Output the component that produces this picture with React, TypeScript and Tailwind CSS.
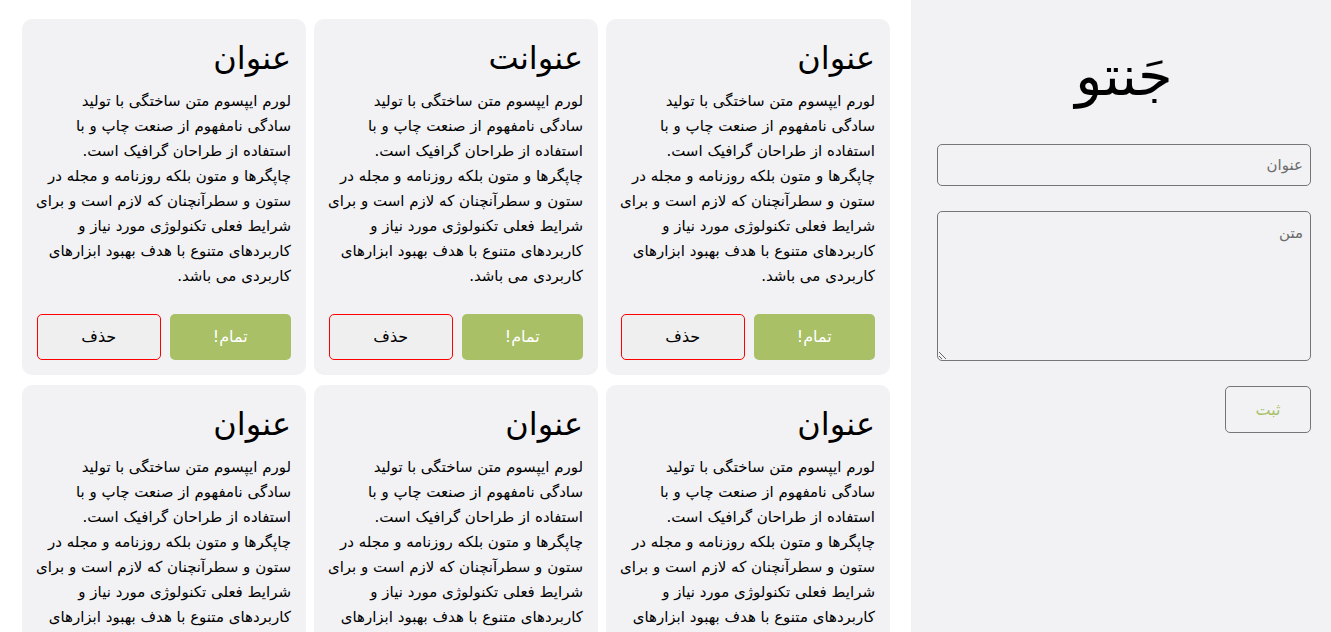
import type { ReactNode } from "react";

// lines are kept as the reference wraps them
const LOREM_LINES = [
  "لورم ایپسوم متن ساختگی با تولید",
  "سادگی نامفهوم از صنعت چاپ و با",
  "استفاده از طراحان گرافیک است.",
  "چاپگرها و متون بلکه روزنامه و مجله در",
  "ستون و سطرآنچنان که لازم است و برای",
  "شرایط فعلی تکنولوژی مورد نیاز و",
  "کاربردهای متنوع با هدف بهبود ابزارهای",
  "کاربردی می باشد.",
];

const notes = [
  { id: 1, title: "عنوان" },
  { id: 2, title: "عنوانت" },
  { id: 3, title: "عنوان" },
  { id: 4, title: "عنوان" },
  { id: 5, title: "عنوان" },
  { id: 6, title: "عنوان" },
];

function NoteCard({ title, children }: { title: string; children: ReactNode }) {
  return (
    <div className="flex flex-col rounded-[10px] bg-[#f2f2f4] px-[15px] pt-[15px] pb-[15px]">
      <h2 className="text-[32px] leading-[48px] text-black">{title}</h2>
      <p className="mt-[7px] text-[15px] leading-[25px] text-black">{children}</p>
      <div className="mt-auto flex gap-[9px] pt-[25px]">
        <button className="h-[46px] flex-1 rounded-[5px] bg-[#a9c067] text-[16px] text-white">
          تمام!
        </button>
        <button className="h-[46px] flex-1 rounded-[5px] border border-[#ff0000] bg-[#efefef] text-[16px] text-black">
          حذف
        </button>
      </div>
    </div>
  );
}

export default function App() {
  return (
    <div
      dir="rtl"
      className="flex min-h-screen bg-white"
      style={{ fontFamily: '"DejaVu Sans", sans-serif' }}
    >
      {/* sidebar form */}
      <aside className="sticky top-0 flex h-screen w-[420px] shrink-0 flex-col bg-[#f2f2f4] pr-[20px] pl-[26px]">
        <h1 className="mt-[36px] text-center text-[56px] leading-[80px] text-black">جَنتو</h1>
        <input
          placeholder="عنوان"
          className="mt-[28px] h-[42px] w-full rounded-[5px] border border-[#767676] bg-transparent px-[7px] text-[15px] placeholder:text-[#6b6b6b]"
        />
        <textarea
          placeholder="متن"
          className="mt-[25px] h-[150px] w-full rounded-[5px] border border-[#767676] bg-transparent px-[7px] py-[10px] text-[15px] placeholder:text-[#6b6b6b]"
        />
        <button className="mt-[25px] h-[47px] w-[86px] rounded-[5px] border border-[#767676] text-[16px] text-[#a9c067]">
          ثبت
        </button>
      </aside>

      {/* notes grid */}
      <main className="grid flex-1 grid-cols-3 content-start gap-x-2 gap-y-[10px] pt-[19px] pr-[21px] pl-[22px]">
        {notes.map((n) => (
          <NoteCard key={n.id} title={n.title}>
            {LOREM_LINES.map((line, i) => (
              <span key={i} className="block whitespace-nowrap">
                {line}
              </span>
            ))}
          </NoteCard>
        ))}
      </main>
    </div>
  );
}
